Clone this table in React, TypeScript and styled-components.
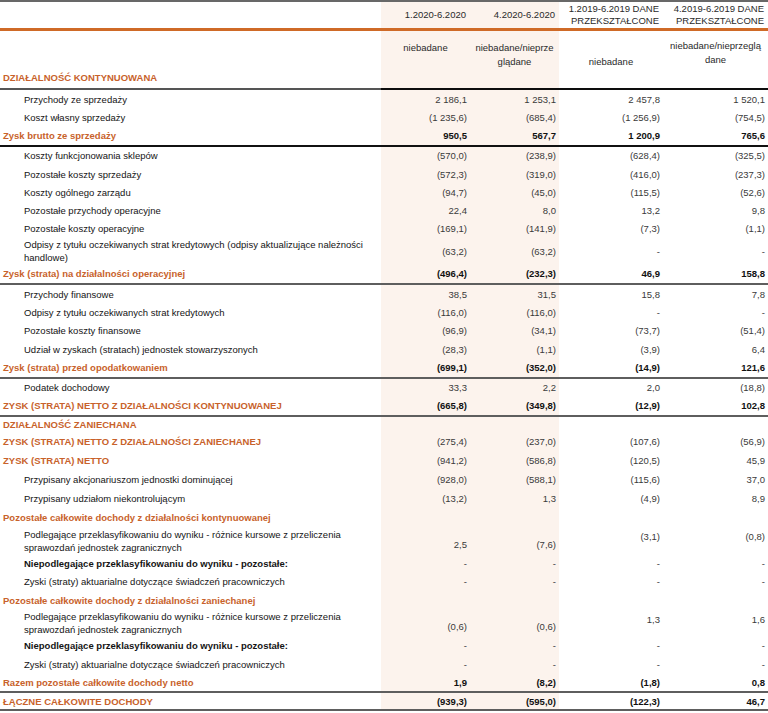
import React from "react";
import styled, { createGlobalStyle, css } from "styled-components";

const GlobalStyle = createGlobalStyle`
  html, body { margin: 0; padding: 0; background: #ffffff; }
  body { font-family: "Liberation Sans", Arial, sans-serif; }
`;

const COLS = "381px 89px 89px 104px 105px";
const ORANGE = "#c8622b";
const CREAM = "#fcf3ed";
const GRAY_LINE = "#5e5e5e";

type Line = "none" | "gray" | "black" | "orange" | "split";
type VAlign = "center" | "start" | "end";
type Kind = "normal" | "head" | "bold";

const Sheet = styled.div`
  width: 768px;
  font-family: "Liberation Sans", Arial, sans-serif;
  font-size: 9.5px;
  color: #1a1a1a;
`;

const Row = styled.div<{ $h: number; $line?: Line; $top?: boolean }>`
  display: grid;
  grid-template-columns: ${COLS};
  height: ${(p) => p.$h}px;
  ${(p) => p.$top && css`border-top: 2px solid #686868;`}
  ${(p) => p.$line === "gray" && css`border-bottom: 2px solid ${GRAY_LINE};`}
  ${(p) => p.$line === "black" && css`border-bottom: 2px solid #111111;`}
  ${(p) => p.$line === "orange" && css`border-bottom: 3px solid #cf6a27;`}
  ${(p) =>
    p.$line === "split" &&
    css`
      border-bottom: 2px solid #111;
      border-image: linear-gradient(to right, #555 0, #555 381px, #0d0d0d 381px, #0d0d0d 100%) 1;
    `}
`;

const LabelCell = styled.div<{ $indent?: boolean; $kind: Kind; $valign?: VAlign; $pb?: number }>`
  display: flex;
  flex-direction: column;
  justify-content: ${(p) => (p.$valign === "end" ? "flex-end" : p.$valign === "start" ? "flex-start" : "center")};
  padding-left: ${(p) => (p.$indent ? 24 : 3)}px;
  padding-bottom: ${(p) => p.$pb ?? 0}px;
  line-height: 13px;
  white-space: nowrap;
  color: ${(p) => (p.$kind === "head" ? ORANGE : "#141414")};
  font-weight: ${(p) => (p.$kind === "normal" ? 400 : 700)};
`;

const ValueCell = styled.div<{ $cream?: boolean; $bold?: boolean; $valign?: VAlign; $pt?: number; $pb?: number }>`
  display: flex;
  justify-content: flex-end;
  align-items: ${(p) => (p.$valign === "end" ? "flex-end" : p.$valign === "start" ? "flex-start" : "center")};
  padding-right: 3px;
  padding-top: ${(p) => p.$pt ?? 0}px;
  padding-bottom: ${(p) => p.$pb ?? 0}px;
  line-height: 13px;
  white-space: nowrap;
  background: ${(p) => (p.$cream ? CREAM : "transparent")};
  color: ${(p) => (p.$bold ? "#111111" : "#3a3a3a")};
  font-weight: ${(p) => (p.$bold ? 700 : 400)};
`;

const PeriodCell = styled.div<{ $cream?: boolean }>`
  display: flex;
  align-items: center;
  justify-content: flex-end;
  text-align: right;
  padding-right: 4px;
  line-height: 12px;
  color: #2a2a2a;
  background: ${(p) => (p.$cream ? CREAM : "transparent")};
`;

const AuditCell = styled.div<{ $cream?: boolean; $pt: number }>`
  display: flex;
  justify-content: center;
  align-items: flex-start;
  text-align: center;
  padding-top: ${(p) => p.$pt}px;
  line-height: 14px;
  color: #2a2a2a;
  background: ${(p) => (p.$cream ? CREAM : "transparent")};
`;

type Item = {
  label: string[];
  kind?: Kind;
  indent?: boolean;
  values?: string[];
  bold?: boolean;
  line?: Line;
  h: number;
  split?: boolean;
};

const PODL = ["Podlegające przeklasyfikowaniu do wyniku - różnice kursowe z przeliczenia", "sprawozdań jednostek zagranicznych"];
const NIEP = ["Niepodlegające przeklasyfikowaniu do wyniku - pozostałe:"];
const AKT = ["Zyski (straty) aktuarialne dotyczące świadczeń pracowniczych"];
const DASH = ["-", "-", "-", "-"];

const rows: Item[] = [
  { h: 18.3, label: ["Przychody ze sprzedaży"], indent: true, values: ["2 186,1", "1 253,1", "2 457,8", "1 520,1"] },
  { h: 18.3, label: ["Koszt własny sprzedaży"], indent: true, values: ["(1 235,6)", "(685,4)", "(1 256,9)", "(754,5)"] },
  { h: 18.3, label: ["Zysk brutto ze sprzedaży"], kind: "head", bold: true, values: ["950,5", "567,7", "1 200,9", "765,6"], line: "black" },
  { h: 18.2, label: ["Koszty funkcjonowania sklepów"], indent: true, values: ["(570,0)", "(238,9)", "(628,4)", "(325,5)"] },
  { h: 18.2, label: ["Pozostałe koszty sprzedaży"], indent: true, values: ["(572,3)", "(319,0)", "(416,0)", "(237,3)"] },
  { h: 18.2, label: ["Koszty ogólnego zarządu"], indent: true, values: ["(94,7)", "(45,0)", "(115,5)", "(52,6)"] },
  { h: 18.2, label: ["Pozostałe przychody operacyjne"], indent: true, values: ["22,4", "8,0", "13,2", "9,8"] },
  { h: 18.2, label: ["Pozostałe koszty operacyjne"], indent: true, values: ["(169,1)", "(141,9)", "(7,3)", "(1,1)"] },
  {
    h: 27,
    label: ["Odpisy z tytułu oczekiwanych strat kredytowych (odpisy aktualizujące należności", "handlowe)"],
    indent: true,
    values: ["(63,2)", "(63,2)", "-", "-"],
  },
  { h: 18.2, label: ["Zysk (strata) na działalności operacyjnej"], kind: "head", bold: true, values: ["(496,4)", "(232,3)", "46,9", "158,8"], line: "gray" },
  { h: 18.4, label: ["Przychody finansowe"], indent: true, values: ["38,5", "31,5", "15,8", "7,8"] },
  { h: 18.4, label: ["Odpisy z tytułu oczekiwanych strat kredytowych"], indent: true, values: ["(116,0)", "(116,0)", "-", "-"] },
  { h: 18.4, label: ["Pozostałe koszty finansowe"], indent: true, values: ["(96,9)", "(34,1)", "(73,7)", "(51,4)"] },
  { h: 18.4, label: ["Udział w zyskach (stratach) jednostek stowarzyszonych"], indent: true, values: ["(28,3)", "(1,1)", "(3,9)", "6,4"] },
  { h: 18.4, label: ["Zysk (strata) przed opodatkowaniem"], kind: "head", bold: true, values: ["(699,1)", "(352,0)", "(14,9)", "121,6"], line: "gray" },
  { h: 18, label: ["Podatek dochodowy"], indent: true, values: ["33,3", "2,2", "2,0", "(18,8)"] },
  { h: 18, label: ["ZYSK (STRATA) NETTO Z DZIAŁALNOŚCI KONTYNUOWANEJ"], kind: "head", bold: true, values: ["(665,8)", "(349,8)", "(12,9)", "102,8"], line: "gray" },
  { h: 15.5, label: ["DZIAŁALNOŚĆ ZANIECHANA"], kind: "head" },
  { h: 19, label: ["ZYSK (STRATA) NETTO Z DZIAŁALNOŚCI ZANIECHANEJ"], kind: "head", values: ["(275,4)", "(237,0)", "(107,6)", "(56,9)"] },
  { h: 19, label: ["ZYSK (STRATA) NETTO"], kind: "head", values: ["(941,2)", "(586,8)", "(120,5)", "45,9"] },
  { h: 19, label: ["Przypisany akcjonariuszom jednostki dominującej"], indent: true, values: ["(928,0)", "(588,1)", "(115,6)", "37,0"] },
  { h: 19, label: ["Przypisany udziałom niekontrolującym"], indent: true, values: ["(13,2)", "1,3", "(4,9)", "8,9"] },
  { h: 19, label: ["Pozostałe całkowite dochody z działalności kontynuowanej"], kind: "head" },
  { h: 27, label: PODL, indent: true, split: true, values: ["2,5", "(7,6)", "(3,1)", "(0,8)"] },
  { h: 18.5, label: NIEP, kind: "bold", indent: true, values: DASH },
  { h: 18, label: AKT, indent: true, values: DASH },
  { h: 19, label: ["Pozostałe całkowite dochody z działalności zaniechanej"], kind: "head" },
  { h: 26.5, label: PODL, indent: true, split: true, values: ["(0,6)", "(0,6)", "1,3", "1,6"] },
  { h: 18.5, label: NIEP, kind: "bold", indent: true, values: DASH },
  { h: 18.5, label: AKT, indent: true, values: DASH },
  { h: 18, label: ["Razem pozostałe całkowite dochody netto"], kind: "head", bold: true, values: ["1,9", "(8,2)", "(1,8)", "0,8"], line: "gray" },
  { h: 16, label: ["ŁĄCZNE CAŁKOWITE DOCHODY"], kind: "head", bold: true, values: ["(939,3)", "(595,0)", "(122,3)", "46,7"], line: "gray" },
];

function valueAlign(item: Item, col: number): { v: VAlign; pt?: number; pb?: number } {
  if (item.split) {
    return col < 2 ? { v: "end", pb: 3 } : { v: "start", pt: 3 };
  }
  return { v: "center" };
}

export default function App() {
  return (
    <>
      <GlobalStyle />
      <Sheet>
        <Row $h={26} $top $line="orange">
          <LabelCell $kind="normal" />
          <PeriodCell $cream>1.2020-6.2020</PeriodCell>
          <PeriodCell $cream>4.2020-6.2020</PeriodCell>
          <PeriodCell>
            1.2019-6.2019 DANE
            <br />
            PRZEKSZTAŁCONE
          </PeriodCell>
          <PeriodCell>
            4.2019-6.2019 DANE
            <br />
            PRZEKSZTAŁCONE
          </PeriodCell>
        </Row>
        <Row $h={57} $line="split">
          <LabelCell $kind="head" $valign="end" $pb={4}>
            DZIAŁALNOŚĆ KONTYNUOWANA
          </LabelCell>
          <AuditCell $cream $pt={10}>niebadane</AuditCell>
          <AuditCell $cream $pt={10}>
            niebadane/nieprze
            <br />
            glądane
          </AuditCell>
          <AuditCell $pt={24}>niebadane</AuditCell>
          <AuditCell $pt={8}>
            niebadane/nieprzeglą
            <br />
            dane
          </AuditCell>
        </Row>
        {rows.map((item, i) => {
          const vals = item.values ?? ["", "", "", ""];
          return (
            <Row key={i} $h={item.h} $line={item.line ?? "none"}>
              <LabelCell $kind={item.kind ?? "normal"} $indent={item.indent}>
                {item.label.map((l, j) => (
                  <span key={j}>{l}</span>
                ))}
              </LabelCell>
              {vals.map((v, c) => {
                const a = valueAlign(item, c);
                return (
                  <ValueCell key={c} $cream={c < 2} $bold={item.bold} $valign={a.v} $pt={a.pt} $pb={a.pb}>
                    {v}
                  </ValueCell>
                );
              })}
            </Row>
          );
        })}
      </Sheet>
    </>
  );
}
